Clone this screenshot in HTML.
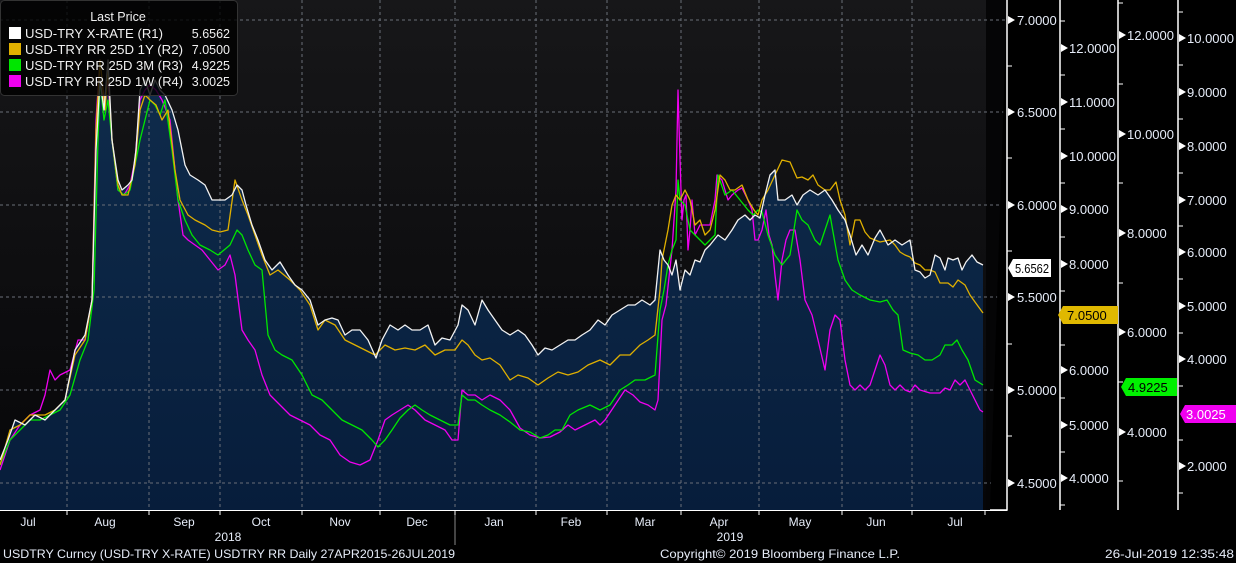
<!DOCTYPE html>
<html><head><meta charset="utf-8"><style>
html,body{margin:0;padding:0;background:#000;}
svg{display:block;font-family:"Liberation Sans",sans-serif;}
</style></head><body>
<svg width="1236" height="563" viewBox="0 0 1236 563" xmlns="http://www.w3.org/2000/svg">
<defs>
<linearGradient id="bg" x1="0" y1="0" x2="0" y2="1"><stop offset="0" stop-color="#171719"/><stop offset="1" stop-color="#060608"/></linearGradient>
<linearGradient id="fl" x1="0" y1="0" x2="0" y2="1"><stop offset="0" stop-color="#0f2c4c"/><stop offset="1" stop-color="#071d3b"/></linearGradient>
</defs>
<rect width="1236" height="563" fill="#000"/>
<rect x="0" y="0" width="1007" height="510" fill="url(#bg)"/>
<rect x="986" y="0" width="21" height="510" fill="#050506"/>
<polygon fill="url(#fl)" points="0,510 0,460 8,440 15,420 25,425 35,415 45,420 55,410 65,400 75,350 85,335 92,300 96,150 100,80 104,110 108,60 112,140 118,180 122,190 128,185 132,180 136,150 140,90 145,80 150,95 155,80 160,90 165,95 172,110 178,130 185,165 190,175 198,180 205,185 212,200 218,200 225,200 232,195 237,185 242,190 246,205 252,225 258,240 265,260 272,270 280,262 288,275 295,285 302,290 310,300 318,325 325,320 332,318 338,320 345,335 352,330 360,330 368,340 376,358 382,340 390,325 398,330 405,325 412,330 420,330 428,325 435,345 442,338 450,340 458,325 462,305 468,310 475,325 482,300 488,310 495,320 502,330 510,335 518,330 525,335 532,345 538,355 545,348 552,350 560,345 568,340 575,340 582,335 590,330 598,320 605,325 612,315 620,310 628,305 635,305 642,300 650,305 655,300 660,250 664,260 668,265 672,275 676,260 680,290 685,270 690,275 695,260 700,262 705,250 710,245 718,235 725,240 732,230 738,220 745,215 750,220 755,215 760,218 765,195 770,175 775,170 778,200 785,200 792,195 797,205 803,195 810,190 818,195 825,190 832,200 838,210 845,220 850,235 856,255 862,245 868,255 875,238 880,230 888,245 895,240 902,245 910,240 915,270 920,272 925,278 930,275 935,255 940,258 945,270 948,258 953,260 958,258 962,270 966,262 972,255 977,262 983,265 983,510"/>
<g stroke="#6a6f78" stroke-width="1" stroke-dasharray="3,3" fill="none">
<path d="M67,0V510M149,0V510M220,0V510M302,0V510M380,0V510M455,0V510M536,0V510M607,0V510M681,0V510M759,0V510M842,0V510M912,0V510"/>
<path d="M0,20H1007M0,112H1007M0,205H1007M0,297H1007M0,390H1007M0,483H1007"/>
</g>
<g fill="none" stroke-width="1.3" stroke-linejoin="round">
<polyline stroke="#f000f0" points="0,470 10,440 20,425 30,415 40,410 45,395 50,370 55,380 60,375 70,370 78,340 85,340 92,300 96,120 100,60 104,100 108,80 112,140 118,190 124,195 130,185 135,160 140,100 145,90 150,85 156,90 162,100 170,120 178,200 183,235 188,240 195,245 202,250 210,260 218,270 225,265 230,255 235,275 242,330 248,340 255,350 262,375 270,395 280,405 290,415 300,420 310,425 320,435 330,440 340,455 350,462 360,465 370,460 378,440 385,420 392,415 400,410 408,405 415,410 425,420 435,425 445,430 452,440 458,440 462,390 468,395 475,395 482,400 490,395 500,400 510,410 520,428 530,435 540,438 550,437 560,432 568,425 575,430 585,425 595,420 600,425 605,420 615,405 625,390 633,395 640,402 648,405 655,410 658,400 662,320 666,305 672,250 676,190 678,90 680,160 682,220 684,200 686,195 688,250 690,230 692,200 695,235 700,225 705,225 710,225 715,200 717,175 722,180 728,200 732,195 738,190 742,188 748,200 752,210 755,240 758,240 762,230 766,210 769,235 772,245 775,275 778,300 782,260 786,240 790,230 795,230 800,260 805,300 812,315 818,340 825,370 830,330 835,315 840,320 845,360 850,385 855,390 860,385 865,390 870,385 875,370 880,355 885,365 890,385 895,390 900,385 905,390 910,392 915,385 920,390 930,393 940,393 945,388 950,390 955,380 960,385 965,380 970,390 975,400 980,410 983,412"/>
<polyline stroke="#00e600" points="0,465 10,440 20,430 30,420 40,420 50,415 60,410 70,395 80,360 88,340 94,290 98,140 100,80 104,120 108,100 112,140 118,190 124,195 130,190 135,165 140,140 145,120 150,100 155,105 160,115 165,100 172,150 178,200 185,220 192,235 200,245 210,250 218,255 224,250 230,245 237,230 242,235 248,250 255,265 262,270 268,335 275,350 282,355 292,360 302,375 312,395 322,400 332,410 342,420 352,425 362,430 372,440 378,447 385,440 392,430 400,418 408,410 415,405 422,410 430,415 440,420 450,425 458,425 462,395 468,400 475,400 482,405 490,410 500,415 510,422 520,430 530,432 540,438 548,435 555,430 562,430 570,415 578,410 590,405 600,410 610,405 620,390 628,385 635,380 645,380 655,375 660,310 664,290 668,265 672,250 676,240 678,180 680,200 685,205 690,230 695,235 700,240 705,245 710,240 715,235 718,175 725,195 732,190 740,200 748,210 753,215 758,210 762,212 768,235 775,255 782,265 790,255 797,210 802,220 808,225 815,240 820,245 825,230 830,215 838,260 845,280 852,290 860,295 870,300 880,302 887,300 893,310 898,315 903,350 910,353 918,355 925,360 932,360 940,355 945,345 952,345 957,340 962,350 968,360 975,380 983,385"/>
<polyline stroke="#e0b000" points="0,465 10,430 20,425 30,415 45,415 55,410 65,400 75,355 85,340 92,300 96,130 100,60 105,110 108,70 112,140 118,185 122,195 128,195 135,165 140,110 145,95 150,100 156,105 162,120 168,110 175,170 180,200 188,215 195,220 205,225 212,230 220,232 228,230 235,180 242,200 248,215 255,235 262,255 270,275 278,270 290,280 300,290 310,305 318,330 325,320 335,325 345,340 355,345 365,350 375,355 385,345 395,350 405,348 415,350 425,345 435,355 445,350 455,350 462,340 468,345 475,355 482,360 490,358 500,365 510,380 518,375 528,378 538,385 548,378 558,372 568,375 578,372 588,365 600,360 610,365 620,355 630,355 640,345 648,340 655,335 660,290 662,260 668,230 672,205 676,195 680,200 685,190 690,200 695,225 700,220 705,235 710,230 715,210 720,175 725,180 730,190 735,190 742,185 748,200 754,210 758,215 762,200 768,190 775,175 782,160 790,162 797,178 802,177 808,180 813,175 818,185 825,190 830,190 836,182 840,200 845,215 850,245 855,220 860,220 865,232 870,238 875,240 880,242 890,240 895,245 900,252 905,255 910,257 915,263 920,265 925,270 930,270 935,272 940,283 948,283 953,287 958,280 965,285 970,295 975,302 983,313"/>
<polyline stroke="#f2f2f2" points="0,460 8,440 15,420 25,425 35,415 45,420 55,410 65,400 75,350 85,335 92,300 96,150 100,80 104,110 108,60 112,140 118,180 122,190 128,185 132,180 136,150 140,90 145,80 150,95 155,80 160,90 165,95 172,110 178,130 185,165 190,175 198,180 205,185 212,200 218,200 225,200 232,195 237,185 242,190 246,205 252,225 258,240 265,260 272,270 280,262 288,275 295,285 302,290 310,300 318,325 325,320 332,318 338,320 345,335 352,330 360,330 368,340 376,358 382,340 390,325 398,330 405,325 412,330 420,330 428,325 435,345 442,338 450,340 458,325 462,305 468,310 475,325 482,300 488,310 495,320 502,330 510,335 518,330 525,335 532,345 538,355 545,348 552,350 560,345 568,340 575,340 582,335 590,330 598,320 605,325 612,315 620,310 628,305 635,305 642,300 650,305 655,300 660,250 664,260 668,265 672,275 676,260 680,290 685,270 690,275 695,260 700,262 705,250 710,245 718,235 725,240 732,230 738,220 745,215 750,220 755,215 760,218 765,195 770,175 775,170 778,200 785,200 792,195 797,205 803,195 810,190 818,195 825,190 832,200 838,210 845,220 850,235 856,255 862,245 868,255 875,238 880,230 888,245 895,240 902,245 910,240 915,270 920,272 925,278 930,275 935,255 940,258 945,270 948,258 953,260 958,258 962,270 966,262 972,255 977,262 983,265"/>
</g>
<!-- legend -->
<rect x="0.5" y="0.5" width="237" height="95" rx="4" fill="#000" fill-opacity="0.8" stroke="#333"/>
<g font-size="12.5" fill="#f0f0f0">
<text x="118" y="21" text-anchor="middle">Last Price</text>
<rect x="9" y="27" width="12" height="12" fill="#fff"/>
<rect x="9" y="43" width="12" height="12" fill="#e0b000"/>
<rect x="9" y="59" width="12" height="12" fill="#00e600"/>
<rect x="9" y="75" width="12" height="12" fill="#f000f0"/>
<text x="25" y="38" textLength="138" lengthAdjust="spacingAndGlyphs">USD-TRY X-RATE  (R1)</text>
<text x="25" y="54" textLength="158" lengthAdjust="spacingAndGlyphs">USD-TRY RR 25D 1Y  (R2)</text>
<text x="25" y="70" textLength="158" lengthAdjust="spacingAndGlyphs">USD-TRY RR 25D 3M  (R3)</text>
<text x="25" y="86" textLength="158" lengthAdjust="spacingAndGlyphs">USD-TRY RR 25D 1W  (R4)</text>
<text x="230" y="38" text-anchor="end">5.6562</text>
<text x="230" y="54" text-anchor="end">7.0500</text>
<text x="230" y="70" text-anchor="end">4.9225</text>
<text x="230" y="86" text-anchor="end">3.0025</text>
</g>
<!-- axes -->
<g stroke="#fff" stroke-width="1.5">
<path d="M1007,0V510H990M1060,0V510M1118,0V510M1178,0V510"/>
</g>
<g stroke="#fff" stroke-width="1">
<path d="M1007,66h5M1007,158h5M1007,251h5M1007,344h5M1007,436h5"/>
<path d="M1060,21h5M1060,75h5M1060,129h5M1060,183h5M1060,237h5M1060,291h5M1060,345h5M1060,398h5M1060,452h5M1060,505h5"/>
<path d="M1118,3h5M1118,84h5M1118,183h5M1118,283h5M1118,382h5M1118,481h5"/>
<path d="M1178,12h5M1178,65h5M1178,119h5M1178,173h5M1178,226h5M1178,279h5M1178,333h5M1178,386h5M1178,440h5M1178,493h5"/>
</g>
<g fill="#fff">
<path d="M1008,16l7,4l-7,4z M1008,108l7,4l-7,4z M1008,201l7,4l-7,4z M1008,293l7,4l-7,4z M1008,386l7,4l-7,4z M1008,479l7,4l-7,4z"/>
<path d="M1061,44l7,4l-7,4z M1061,98l7,4l-7,4z M1061,152l7,4l-7,4z M1061,205l7,4l-7,4z M1061,260l7,4l-7,4z M1061,366l7,4l-7,4z M1061,421l7,4l-7,4z M1061,474l7,4l-7,4z"/>
<path d="M1119,31l7,4l-7,4z M1119,130l7,4l-7,4z M1119,229l7,4l-7,4z M1119,328l7,4l-7,4z M1119,428l7,4l-7,4z"/>
<path d="M1179,34l7,4l-7,4z M1179,88l7,4l-7,4z M1179,142l7,4l-7,4z M1179,196l7,4l-7,4z M1179,248l7,4l-7,4z M1179,302l7,4l-7,4z M1179,355l7,4l-7,4z M1179,462l7,4l-7,4z"/>
</g>
<g font-size="13" fill="#e6ecf8">
<text x="1017" y="25">7.0000</text><text x="1017" y="117">6.5000</text><text x="1017" y="210">6.0000</text><text x="1017" y="302">5.5000</text><text x="1017" y="395">5.0000</text><text x="1017" y="488">4.5000</text>
<text x="1069" y="53">12.0000</text><text x="1069" y="107">11.0000</text><text x="1069" y="161">10.0000</text><text x="1069" y="214">9.0000</text><text x="1069" y="269">8.0000</text><text x="1069" y="375">6.0000</text><text x="1069" y="430">5.0000</text><text x="1069" y="483">4.0000</text>
<text x="1127" y="40">12.0000</text><text x="1127" y="139">10.0000</text><text x="1127" y="238">8.0000</text><text x="1127" y="337">6.0000</text><text x="1127" y="437">4.0000</text>
<text x="1187" y="43">10.0000</text><text x="1187" y="97">9.0000</text><text x="1187" y="151">8.0000</text><text x="1187" y="205">7.0000</text><text x="1187" y="257">6.0000</text><text x="1187" y="311">5.0000</text><text x="1187" y="364">4.0000</text><text x="1187" y="471">2.0000</text>
</g>
<!-- badges -->
<path d="M1013,259H1051V277H1013L1008,268Z" fill="#fff"/>
<text x="1015" y="273" font-size="13" fill="#000" textLength="34" lengthAdjust="spacingAndGlyphs">5.6562</text>
<path d="M1063,306H1118V324H1063L1058,315Z" fill="#e0b800"/>
<text x="1067" y="320" font-size="13" fill="#000">7.0500</text>
<path d="M1126,378H1177V396H1126L1121,387Z" fill="#00f000"/>
<text x="1128" y="392" font-size="13" fill="#000">4.9225</text>
<path d="M1185,405H1236V423H1185L1180,414Z" fill="#f000f0"/>
<text x="1186" y="419" font-size="13" fill="#fff">3.0025</text>
<!-- x axis -->
<g stroke="#fff" stroke-width="1"><path d="M0,510.5H1007"/><path d="M67,510v5M149,510v5M220,510v5M302,510v5M380,510v5M455,510v5M536,510v5M607,510v5M681,510v5M759,510v5M842,510v5M912,510v5M985,510v5"/></g>
<path d="M455,515V545" stroke="#888" stroke-width="1"/>
<g font-size="12" fill="#e6ecf8" text-anchor="middle">
<text x="28" y="526">Jul</text><text x="105" y="526">Aug</text><text x="184" y="526">Sep</text><text x="261" y="526">Oct</text><text x="340" y="526">Nov</text><text x="417" y="526">Dec</text><text x="494" y="526">Jan</text><text x="571" y="526">Feb</text><text x="645" y="526">Mar</text><text x="719" y="526">Apr</text><text x="800" y="526">May</text><text x="876" y="526">Jun</text><text x="955" y="526">Jul</text>
<text x="228" y="541">2018</text><text x="730" y="541">2019</text>
</g>
<g font-size="12" fill="#e6ecf8">
<text x="3" y="558" textLength="452" lengthAdjust="spacingAndGlyphs">USDTRY Curncy (USD-TRY X-RATE) USDTRY RR  Daily 27APR2015-26JUL2019</text>
<text x="660" y="558" textLength="240" lengthAdjust="spacingAndGlyphs">Copyright© 2019 Bloomberg Finance L.P.</text>
<text x="1105" y="558" textLength="129" lengthAdjust="spacingAndGlyphs">26-Jul-2019 12:35:48</text>
</g>
</svg>
</body></html>
